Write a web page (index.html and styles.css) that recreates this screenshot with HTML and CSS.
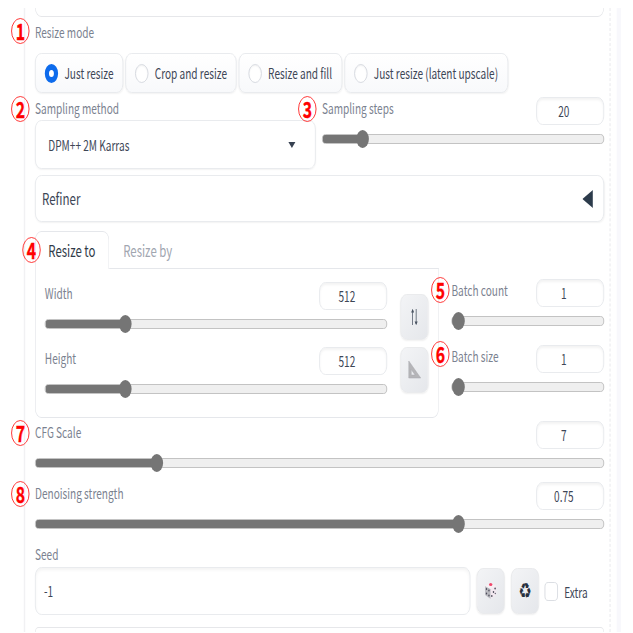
FILE: index.html
```html
<!DOCTYPE html>
<html lang="en">
<head>
  <meta charset="UTF-8" />
  <title>Generation settings</title>
  <link rel="stylesheet" href="styles.css">
</head>
<body>
  <div class="page">
    <main class="settings">
      <div class="block-end"></div>

      <div class="label mode-label"><b class="badge">1</b>Resize mode</div>
      <div class="radios">
        <div class="radio w1"><i class="dot checked"></i><span>Just resize</span></div>
        <div class="radio w2"><i class="dot"></i><span>Crop and resize</span></div>
        <div class="radio w3"><i class="dot"></i><span>Resize and fill</span></div>
        <div class="radio w4"><i class="dot"></i><span>Just resize (latent upscale)</span></div>
      </div>

      <div class="sampling">
        <div class="method">
          <div class="label"><b class="badge">2</b>Sampling method</div>
          <div class="select"><span>DPM++ 2M Karras</span><i class="caret"></i></div>
        </div>
        <div class="field steps">
          <div class="label"><b class="badge">3</b>Sampling steps</div>
          <div class="number">20</div>
          <div class="slider" style="--pos: 14.3%"><i></i></div>
        </div>
      </div>

      <div class="accordion">
        <span>Refiner</span>
        <svg width="15" height="18" viewBox="0 0 15 18"><path d="M15 0v18L0 9z" fill="#2c3b4b"/></svg>
      </div>

      <div class="size-row">
        <div class="resize">
          <div class="tabs">
            <div class="tab active"><b class="badge">4</b>Resize to</div>
            <div class="tab">Resize by</div>
          </div>
          <div class="panel">
            <div class="dimensions">
              <div class="field">
                <div class="label">Width</div>
                <div class="number">512</div>
                <div class="slider" style="--pos: 23.5%"><i></i></div>
              </div>
              <div class="field">
                <div class="label">Height</div>
                <div class="number">512</div>
                <div class="slider" style="--pos: 23.5%"><i></i></div>
              </div>
            </div>
            <div class="tools">
              <div class="tool">
                <svg width="12" height="18" viewBox="0 0 12 18" fill="none" stroke="#4b5563" stroke-width="1.1">
                  <path d="M3.5 17V2M8.5 1v15"/>
                  <path d="M1.3 4.5L3.5.8l2.2 3.7zM6.3 13.5l2.2 3.7 2.2-3.7z" fill="#4b5563" stroke="none"/>
                </svg>
              </div>
              <div class="tool">
                <svg width="20" height="20" viewBox="0 0 20 20">
                  <path d="M2 1v17h17zM5.5 9.5l5.5 5.5H5.5z" fill="#b5b5b8" fill-rule="evenodd" stroke="#a9a9ad" stroke-width=".6"/>
                </svg>
              </div>
            </div>
          </div>
        </div>
        <div class="batch">
          <div class="field">
            <div class="label"><b class="badge">5</b>Batch count</div>
            <div class="number">1</div>
            <div class="slider" style="--pos: 4%"><i></i></div>
          </div>
          <div class="field">
            <div class="label"><b class="badge raised">6</b>Batch size</div>
            <div class="number">1</div>
            <div class="slider" style="--pos: 4%"><i></i></div>
          </div>
        </div>
      </div>

      <div class="field cfg">
        <div class="label"><b class="badge">7</b>CFG Scale</div>
        <div class="number">7</div>
        <div class="slider" style="--pos: 21.3%"><i></i></div>
      </div>
      <div class="field denoise">
        <div class="label"><b class="badge">8</b>Denoising strength</div>
        <div class="number">0.75</div>
        <div class="slider" style="--pos: 74.5%"><i></i></div>
      </div>

      <div class="label seed-label">Seed</div>
      <div class="seed">
        <div class="seed-input">-1</div>
        <div class="tool">
          <svg width="18" height="18" viewBox="0 0 18 18">
            <path d="M1 4l8 3v10l-8-4z" fill="#b9b9bf"/>
            <path d="M9 7l8-3v9l-8 4z" fill="#f3e9f0"/>
            <path d="M1 4l8-3 8 3-8 3z" fill="#f6f0f4"/>
            <ellipse cx="9" cy="2.5" rx="2.4" ry="1.5" fill="#f0476b"/>
            <g fill="#4a4a58">
              <circle cx="3" cy="7" r="1"/><circle cx="6.5" cy="8.5" r="1"/><circle cx="3" cy="11.5" r="1"/><circle cx="6.5" cy="13.5" r="1"/>
              <circle cx="15.3" cy="6.5" r="1.1"/><circle cx="13" cy="10" r="1.1"/><circle cx="10.6" cy="14" r="1.1"/><circle cx="15.5" cy="11.5" r=".8"/>
            </g>
          </svg>
        </div>
        <div class="tool recycle">♻</div>
        <i class="checkbox"></i>
        <span>Extra</span>
      </div>
      <div class="block-start"></div>
    </main>
    <div class="gutter"></div>
  </div>
</body>
</html>
```

FILE: styles.css
```css
* { box-sizing: border-box; margin: 0; padding: 0; }

body {
  background: #fff;
  color: #3d4656;
  font-family: "Noto Sans CJK JP", sans-serif;
  font-size: 14.4px;
  height: 633px;
  overflow: hidden;
}

/* condensed view: everything is narrowed to 70% */
.page {
  display: flex;
  width: 890px;
  height: 632px;
  margin-right: -257px;
  padding-top: 8px;
  transform: scaleX(.7);
  transform-origin: 0 0;
}

.settings {
  display: flex;
  flex-direction: column;
  flex: none;
  width: 838px;
  height: 624px;
  margin-left: 34px;
  padding: 0 8px 0 14px;
  border-left: 2px solid #f1f1f3;
  border-right: 1px dashed #e4e5e9;
}

.gutter {
  width: 6px;
  margin-left: 9px;
  background: #f8f8fc;
}

.block-end {
  height: 9px;
  border: solid #e6e7ea;
  border-width: 0 1px 1px;
  border-radius: 0 0 9px 9px;
  flex: none;
}

.block-start {
  height: 5px;
  margin-top: 12px;
  border: solid #e6e7ea;
  border-width: 1px 1px 0;
  border-radius: 9px 9px 0 0;
  flex: none;
}

.label {
  position: relative;
  height: 23px;
  line-height: 22px;
  color: #7b8290;
  white-space: nowrap;
}

.badge {
  position: absolute;
  left: -34px;
  top: -1px;
  width: 26px;
  height: 26px;
  border: 1.5px solid #ff1616;
  border-radius: 50%;
  color: #f00;
  font-size: 22.5px;
  font-weight: 700;
  line-height: 22px;
  text-align: center;
  -webkit-text-stroke: .4px #f00;
}

.mode-label {
  margin-top: 3px;
  line-height: 23px;
}

.mode-label .badge { top: -2px; }

.radios {
  display: flex;
  gap: 3px;
  margin-top: 10px;
}

.radio {
  display: flex;
  align-items: center;
  gap: 9px;
  height: 40px;
  padding-left: 13px;
  border: 1px solid #e5e7eb;
  border-radius: 9px;
  background: linear-gradient(#fff, #f8f9fb);
  box-shadow: 0 1px 2px rgba(0, 0, 0, .05);
  line-height: 20px;
  white-space: nowrap;
}

.radio span { padding-bottom: 1px; }

.w1 { width: 126px; }
.w2 { width: 159px; }
.w3 { width: 148px; }
.w4 { width: 234px; }

.dot {
  width: 19px;
  height: 19px;
  border: 1px solid #d1d5db;
  border-radius: 50%;
  background: #fff;
  box-shadow: inset 0 1px 2px rgba(0, 0, 0, .06);
}

.dot.checked {
  border: 6px solid #0d6bec;
  box-shadow: none;
}

.sampling {
  display: flex;
  gap: 9px;
  height: 72px;
  margin-top: 4px;
}

.method { width: 401px; }

.select {
  display: flex;
  align-items: center;
  justify-content: space-between;
  height: 49px;
  padding: 0 28px 0 18px;
  border: 1px solid #e5e7eb;
  border-radius: 9px;
  box-shadow: 0 1px 2px rgba(0, 0, 0, .05);
}

.select span { padding-bottom: 1px; }

.caret {
  border: 5px solid transparent;
  border-top: 6px solid #374151;
  border-bottom: 0;
}

.field {
  display: grid;
  grid-template-columns: 1fr 97px;
  grid-template-rows: 28px 10px;
  row-gap: 9px;
}

.number {
  height: 28px;
  padding-right: 18px;
  border: 1px solid #e5e7eb;
  border-radius: 9px;
  box-shadow: inset 0 2px 3px rgba(0, 0, 0, .05);
  line-height: 26px;
  text-align: center;
}

.slider {
  position: relative;
  grid-column: 1 / 3;
  border: 1px solid #b8b8b8;
  border-radius: 6px;
  background: linear-gradient(90deg, #757575 var(--pos), #efefef var(--pos));
}

.slider i {
  position: absolute;
  left: var(--pos);
  top: -5px;
  width: 18px;
  height: 18px;
  margin-left: -9px;
  border-radius: 50%;
  background: #757575;
}

.steps { flex: 1; }

.accordion {
  display: flex;
  align-items: center;
  justify-content: space-between;
  height: 47px;
  margin-top: 6px;
  padding: 0 15px 0 9px;
  border: 1px solid #e5e7eb;
  border-radius: 9px;
  box-shadow: 0 1px 2px rgba(0, 0, 0, .05);
  font-size: 16.5px;
}

.accordion span { padding-bottom: 2px; }

.size-row {
  display: flex;
  gap: 18px;
  height: 187px;
  margin-top: 9px;
}

.resize { width: 577px; }

.tabs {
  display: flex;
  height: 38px;
}

.tab {
  position: relative;
  padding-left: 20px;
  color: #a1a6b0;
  font-size: 16.3px;
  line-height: 38px;
  border-bottom: 1px solid #e5e7eb;
  flex: 1;
}

.tab.active {
  flex: none;
  width: 106px;
  padding-left: 18px;
  border: 1px solid #e5e7eb;
  border-bottom: 0;
  border-radius: 9px 9px 0 0;
  color: #303a48;
  line-height: 36px;
}

.tab .badge {
  left: -19px;
  top: 5px;
  line-height: 22px;
}

.panel {
  display: flex;
  height: 149px;
  padding: 13px 14px 0 13px;
  border: 1px solid #e5e7eb;
  border-top: 0;
  border-radius: 0 0 9px 9px;
}

.dimensions {
  display: grid;
  gap: 18px;
  align-content: start;
  width: 489px;
}

.tools {
  display: grid;
  gap: 7px;
  align-content: start;
  margin: 12px 0 0 19px;
}

.tool {
  display: flex;
  align-items: center;
  justify-content: center;
  width: 40px;
  height: 46px;
  border: 1px solid #e6e7ea;
  border-radius: 9px;
  background: linear-gradient(135deg, #f3f4f6, #e5e7eb);
  box-shadow: 0 1px 2px rgba(0, 0, 0, .06);
}

.batch {
  display: grid;
  gap: 19px;
  align-content: start;
  flex: 1;
  padding-top: 48px;
}

.batch .badge {
  left: -29px;
  top: -2px;
}

.batch .badge.raised { top: -4px; }

.cfg { margin-top: 3px; }
.denoise { margin-top: 14px; }
.seed-label { margin-top: 14px; }

.seed {
  display: flex;
  align-items: center;
  gap: 9px;
  height: 48px;
  margin-top: 1px;
}

.seed-input {
  width: 622px;
  height: 48px;
  padding-left: 12px;
  border: 1px solid #e5e7eb;
  border-radius: 9px;
  box-shadow: inset 0 2px 4px rgba(0, 0, 0, .05);
  line-height: 45px;
}

.recycle {
  color: #27303e;
  font-family: "DejaVu Sans", sans-serif;
  font-size: 21px;
}

.checkbox {
  width: 19px;
  height: 19px;
  margin-left: -1px;
  border: 1px solid #d5d8de;
  border-radius: 5px;
}
```
